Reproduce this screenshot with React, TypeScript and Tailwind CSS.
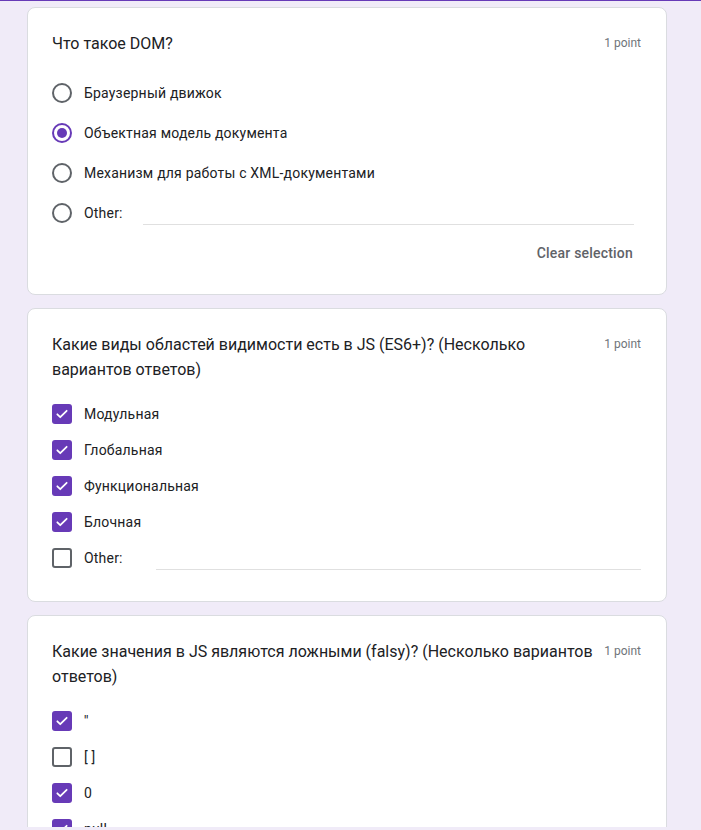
import React from "react"

const font = { fontFamily: "Roboto, 'Noto Sans', Arial, sans-serif" }

type Option = { label: string; checked?: boolean }

const Radio = ({ checked }: { checked?: boolean }) => (
  <span
    className={
      "flex h-5 w-5 shrink-0 items-center justify-center rounded-full border-2 " +
      (checked ? "border-[#673ab7]" : "border-[#5f6368]")
    }
  >
    {checked && <span className="h-2.5 w-2.5 rounded-full bg-[#673ab7]" />}
  </span>
)

const Checkbox = ({ checked }: { checked?: boolean }) =>
  checked ? (
    <span className="flex h-5 w-5 shrink-0 items-center justify-center rounded-[3px] bg-[#673ab7]">
      <svg width="14" height="14" viewBox="0 0 24 24" fill="none">
        <path d="M4 12.5l5 5L20 6.5" stroke="white" strokeWidth="3" strokeLinecap="round" strokeLinejoin="round" />
      </svg>
    </span>
  ) : (
    <span className="h-5 w-5 shrink-0 rounded-[3px] border-2 border-[#5f6368]" />
  )

const Title = ({ text }: { text: string }) => (
  <div className="flex items-start gap-[10px]">
    <div className="flex-1 text-[16px] leading-[25px] text-[#202124]">{text}</div>
    <div className="pt-[2px] text-[12px] leading-5 text-[#70757a]">1 point</div>
  </div>
)

const RadioQuestion = () => {
  const options: Option[] = [
    { label: "Браузерный движок" },
    { label: "Объектная модель документа", checked: true },
    { label: "Механизм для работы с XML-документами" },
  ]
  return (
    <div className="rounded-lg border border-[#dadce0] bg-white pl-6 pr-[25px] pt-[23px] pb-[30px]">
      <Title text="Что такое DOM?" />
      <div className="mt-[17px] flex flex-col">
        {options.map((o) => (
          <div key={o.label} className="flex h-10 items-center gap-3">
            <Radio checked={o.checked} />
            <span className="text-[14px] tracking-[0.2px] text-[#202124]">{o.label}</span>
          </div>
        ))}
        <div className="flex h-10 items-center gap-3">
          <Radio />
          <span className="text-[14px] tracking-[0.2px] text-[#202124]">Other:</span>
          <div className="ml-[8px] mr-[7px] mt-[22px] h-px flex-1 bg-[#e0e0e0]" />
        </div>
      </div>
      <div className="mt-[10px] flex justify-end pr-[8px]">
        <span className="text-[14px] font-medium tracking-[0.2px] text-[#5f6368]">Clear selection</span>
      </div>
    </div>
  )
}

const CheckQuestion = ({
  title,
  options,
  other,
  pb,
}: {
  title: string
  options: Option[]
  other?: boolean
  pb: string
}) => (
  <div className={"rounded-lg border border-[#dadce0] bg-white pl-6 pr-[25px] pt-[23px] " + pb}>
    <Title text={title} />
    <div className="mt-[14px] flex flex-col">
      {options.map((o, i) => (
        <div key={i} className="flex h-9 items-center gap-3">
          <Checkbox checked={o.checked} />
          <span className="text-[14px] tracking-[0.2px] text-[#202124]">{o.label}</span>
        </div>
      ))}
      {other && (
        <div className="flex h-9 items-center gap-3">
          <Checkbox />
          <span className="text-[14px] tracking-[0.2px] text-[#202124]">Other:</span>
          <div className="ml-[21px] mt-[22px] h-px flex-1 bg-[#e0e0e0]" />
        </div>
      )}
    </div>
  </div>
)

export default function App() {
  return (
    <div className="h-[830px] w-[701px] overflow-hidden bg-[#f0ebf8]" style={font}>
      <div className="h-px bg-[#673ab7]" />
      <div className="h-[826px] overflow-hidden">
        <div className="ml-[27px] mr-[34px] flex flex-col gap-[13px] pt-[6px]">
          <RadioQuestion />
          <CheckQuestion
            title="Какие виды областей видимости есть в JS (ES6+)? (Несколько вариантов ответов)"
            options={[
              { label: "Модульная", checked: true },
              { label: "Глобальная", checked: true },
              { label: "Функциональная", checked: true },
              { label: "Блочная", checked: true },
            ]}
            other
            pb="pb-[25px]"
          />
          <CheckQuestion
            title="Какие значения в JS являются ложными (falsy)? (Несколько вариантов ответов)"
            options={[
              { label: "''", checked: true },
              { label: "[ ]" },
              { label: "0", checked: true },
              { label: "null", checked: true },
              { label: "undefined", checked: true },
            ]}
            pb="pb-6"
          />
        </div>
      </div>
    </div>
  )
}
